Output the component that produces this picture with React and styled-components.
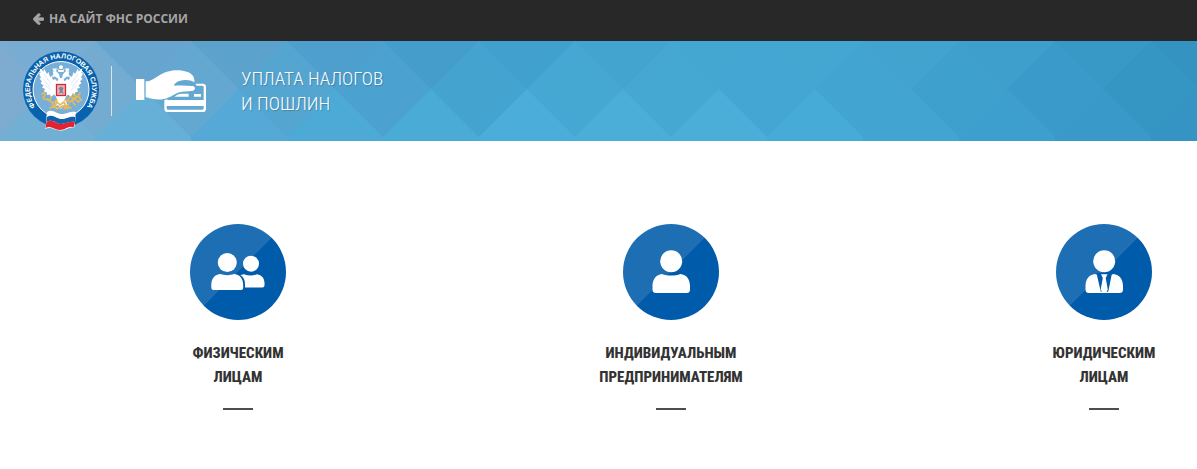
import styled, { createGlobalStyle } from "styled-components";

const topCells = [
  "#79acd2", "#67a5ce", "#5ba2cd", "#4f9fce", "#459dcc", "#42a0ce", "#43a4d0",
  "#44a7d2", "#44a7d1", "#42a3cf", "#3e9ecc", "#3899c7", "#3593c1",
];

const middleCells = [
  "#7eacd0", "#74abd1", "#64a7d1", "#55a5d1", "#4ba2d0", "#45a3d0", "#45a8d3",
  "#45a8d3", "#44a7d3", "#42a5d1", "#3da0cd", "#3a9aca", "#3595c3",
];

const bottomCells = [
  "#72afd5", "#66afd6", "#55a9d6", "#4daad7", "#4aabd6", "#4badd9", "#4baed9",
  "#4aaed9", "#46acd7", "#42a5d1", "#3c9fcd", "#3999c8", "#3594c3",
];

function Pattern() {
  return (
    <PatternSvg viewBox="0 0 1197 100" preserveAspectRatio="xMidYMid slice" aria-hidden="true">
      {topCells.map((color, i) => (
        <rect key={i} x={i * 96 - 1} y="0" width="96" height="48" fill={color} />
      ))}
      {bottomCells.map((color, i) => (
        <rect key={i} x={i * 96 - 1} y="48" width="96" height="52" fill={color} />
      ))}
      {middleCells.map((color, i) => (
        <path key={i} d={`M${i * 96 - 1} 0l48 48l-48 48l-48 -48z`} fill={color} />
      ))}
    </PatternSvg>
  );
}

function ArrowLeft() {
  return (
    <svg width="11" height="12" viewBox="180 130 1500 1636" fill="currentColor" aria-hidden="true">
      <path
        stroke="currentColor"
        strokeWidth="90"
        d="M1664 896v128q0 53-32.5 90.5t-84.5 37.5h-704l293 294q38 36 38 90t-38 90l-75 76q-37 37-90 37-52 0-91-37l-651-652q-37-37-37-90 0-52 37-91l651-650q38-38 91-38 52 0 90 38l75 74q38 38 38 91t-38 91l-293 293h704q52 0 84.5 37.5t32.5 90.5z"
      />
    </svg>
  );
}

function Emblem() {
  return (
    <svg width="76" height="80" viewBox="0 0 76 80" aria-hidden="true">
      <defs>
        <path id="ring" d="M15.700 60A31 31 0 1 1 60.300 60" />
      </defs>
      <circle cx="38" cy="38.500" r="38" fill="#0862ae" />
      <circle cx="38" cy="38.500" r="28" fill="#78afd8" stroke="#fff" strokeWidth="1" />
      <RingText>
        <textPath href="#ring" startOffset="50%">ФЕДЕРАЛЬНАЯ НАЛОГОВАЯ СЛУЖБА</textPath>
      </RingText>

      {/* wings */}
      <g fill="#fff">
        <path id="wing" d="M35 31L32 28L30 29L28.500 25L27 26L25.500 21L24 23L21 17.500L20.500 20.500L16.500 17L17.500 22L16 22.500L18 26.500L16.500 27.500L19 30.500L17.500 32L20.500 34.500L19 36.500L22 38L21 40.500L24 41.500L24 44L27 43.500L28 46L31 43.500L35 48Z" />
        <use href="#wing" transform="matrix(-1 0 0 1 76 0)" />
        <path d="M35.500 28L32 25.500L28.500 26L30.500 23L29.500 20.500L33 20L36 23L37 27H39L40 23L43 20L46.500 20.500L45.500 23L47.500 26L44 25.500L40.500 28L43 33V46L38 53L33 46V33Z" />
        <path d="M34.500 17.500L36 19H40L41.500 17.500L40.500 21H35.500ZM37.300 14H38.700V15H40L39.500 18H36.500L36 15H37.300Z" />
        <path d="M29.500 17.500H34L33 20H30.500ZM42 17.500H46.500L45.500 20H43Z" />
        <path d="M34 47L31 56L35 54L38 58L41 54L45 56L42 47Z" />
      </g>
      <g fill="none" stroke="#a9c8de" strokeWidth="0.400">
        <path d="M21 23L28 33M20 28L27 36M22 34L28 39M55 23L48 33M56 28L49 36M54 34L48 39" />
      </g>

      {/* sceptre, orb and laurel */}
      <g fill="none" stroke="#e5b95c" strokeWidth="1.700" strokeLinecap="round">
        <path d="M19 43C20 41 23 42 22 44S19 47 21 48L27 49L28 46M24 48L30 52L34 49M27 57L32 55L34 51L37 54L41 51L43 55L48 57M29 53L34 58M46 53L41 58M42 49L47 51L51 47L55 51L58 49L55 45L57 42M50 43L54 46L49 50L52 54M30 56L36 57L40 55L45 58M52 47L47 46L44 50" />
      </g>

      <rect x="33.500" y="33.500" width="9" height="11" fill="#d8b9bd" stroke="#d9262e" strokeWidth="1.300" />
      <path d="M35.500 43L37 40L35.500 37L38 35.500L40.500 37L39.500 40L41 43L38 41.500Z" fill="#8d7e94" />

      {/* flag */}
      <path d="M24 61C30 57 34 64 40 63S48 60 53 61C52 66 53 70 51 77C46 75 43 80 37 79.500S28 75 22 78C24 71 23 67 24 61Z" fill="#fff" />
      <path d="M24 66C30 62 34 69 40 68S47 65 52 66L52 71C47 70 43 73 38 73S30 67 23.500 71Z" fill="#1560aa" />
      <path d="M23.500 71C30 67 34 74 39 73S47 70 52 71L50.500 76.500C46 74 43 79 37 79S28 74 22.500 77Z" fill="#e2222e" />
    </svg>
  );
}

function HandWithCard() {
  return (
    <svg width="70" height="42" viewBox="48 60 210 126" fill="#fff" aria-hidden="true">
      <rect x="48" y="87" width="25" height="63" rx="1" />
      <path d="M77 94C93 94 102 85 116 77C132 68 148 61 170 61C190 61 208 66 216 74C222 80 224 88 223 97C213 90 194 88 178 93C169 96 163 101 162 107C178 106 198 106 218 108C227 110 227 119 219 122C202 125 190 123 178 127C162 133 148 145 128 148C108 150 92 146 77 141Z" />
      <path
        fillRule="evenodd"
        d="M226 101H248Q258 101 258 111V176Q258 186 248 186H143Q133 186 133 176V151L142 147V151H251V111Q251 107 247 107H230ZM140 168V175Q140 179 144 179H247Q251 179 251 175V168Z"
      />
      <path d="M222 132H243V140H222ZM172 134L182 131H206V140H163ZM136 151H255V168H136Z" />
    </svg>
  );
}

function PeopleIcon() {
  return (
    <svg width="96" height="96" viewBox="0 0 96 96" fill="#fff" aria-hidden="true">
      <circle cx="37.300" cy="38.500" r="9.500" />
      <path d="M30 50C34.500 51.500 40 51.500 44.500 50C50.500 51 53.200 55 53.200 61V64Q53.200 66 51 66H23.500Q21.300 66 21.300 64V61C21.300 55 24 51 30 50Z" />
      <circle cx="61" cy="39.700" r="8" />
      <path d="M54 50.200C58.500 52 63 52 67 50.200C72 51 74.500 54.500 74.500 59V61.500Q74.500 63.500 72.300 63.500H55V60C55 56 53.500 53 50.500 51Z" />
    </svg>
  );
}

function PersonIcon({ suit }) {
  return (
    <svg width="96" height="96" viewBox="0 0 96 96" aria-hidden="true">
      <circle cx="48.200" cy="37.200" r="11" fill="#fff" />
      <path
        fill="#fff"
        d="M39 50C44.500 52 52 52 57.500 50C63.500 50.500 67 55.500 67 62V65.500Q67 69 63.500 69H33Q29.500 69 29.500 65.500V62C29.500 55.500 33 50.500 39 50Z"
      />
      {suit && (
        <>
          <path fill="#005bab" d="M40.500 49H56L52.300 67.500L48.300 69L44.700 67.500Z" />
          <path fill="#fff" d="M45 50.300H51.500L49.700 54L51.800 65.500L50.200 69H46.300L44.700 65.500L46.800 54Z" />
        </>
      )}
    </svg>
  );
}

const payers = [
  { lines: ["Физическим", "лицам"], icon: <PeopleIcon /> },
  { lines: ["Индивидуальным", "предпринимателям"], icon: <PersonIcon /> },
  { lines: ["Юридическим", "лицам"], icon: <PersonIcon suit /> },
];

export default function App() {
  return (
    <>
      <GlobalStyle />
      <TopBar>
        <BackLink href="#">
          <ArrowLeft />
          На сайт ФНС России
        </BackLink>
      </TopBar>

      <Header>
        <Pattern />
        <EmblemLink href="#" aria-label="ФНС России">
          <Emblem />
        </EmblemLink>
        <Divider />
        <HandWithCard />
        <Title>
          Уплата налогов
          <br />и пошлин
        </Title>
      </Header>

      <Payers>
        {payers.map(({ lines, icon }) => (
          <PayerLink href="#" key={lines[0]}>
            <Circle>{icon}</Circle>
            <PayerName>
              {lines[0]}
              <br />
              {lines[1]}
            </PayerName>
            <Dash />
          </PayerLink>
        ))}
      </Payers>
    </>
  );
}

const GlobalStyle = createGlobalStyle`
  * {
    box-sizing: border-box;
  }

  body {
    margin: 0;
    background: #fff;
    font-family: "Open Sans", sans-serif;
  }
`;

const TopBar = styled.nav`
  display: flex;
  align-items: center;
  padding: 10px 33px 14px;
  background: #282828;
`;

const BackLink = styled.a`
  display: flex;
  align-items: center;
  gap: 5px;
  color: #a6a6a6;
  font-size: 12px;
  font-weight: 700;
  line-height: 17px;
  text-decoration: none;
  text-transform: uppercase;
`;

const Header = styled.header`
  position: relative;
  display: flex;
  align-items: center;
  padding: 10px 23px;
  overflow: hidden;

  > * {
    position: relative;
    flex: none;
  }
`;

const PatternSvg = styled.svg`
  && {
    position: absolute;
    inset: 0;
    width: 100%;
    height: 100%;
  }
`;

const EmblemLink = styled.a`
  display: flex;
`;

const RingText = styled.text`
  fill: #fff;
  font-family: "Liberation Sans", sans-serif;
  font-size: 7px;
  font-weight: 700;
  text-anchor: middle;
`;

const Divider = styled.span`
  width: 1px;
  height: 50px;
  margin: 0 24px 0 12px;
  background: rgba(255, 255, 255, 0.7);
`;

const Title = styled.h1`
  margin: 0 0 0 35px;
  color: #fff;
  font-family: "Roboto Condensed", Roboto, sans-serif;
  font-size: 19px;
  font-weight: 300;
  line-height: 25px;
  text-transform: uppercase;
  text-shadow: 1px 1px 1px rgba(0, 0, 0, 0.2);
`;

const Payers = styled.main`
  display: grid;
  grid-template-columns: repeat(3, 144px);
  justify-content: space-between;
  padding: 83px 21px 59px 166px;
`;

const PayerLink = styled.a`
  display: flex;
  flex-direction: column;
  align-items: center;
  color: #333;
  text-decoration: none;
`;

const Circle = styled.span`
  display: flex;
  border-radius: 50%;
  background: linear-gradient(135deg, #1e6eb4 50%, #005bab 50%);
`;

const PayerName = styled.span`
  padding: 21px 0 19px;
  font-family: "Roboto Condensed", Roboto, sans-serif;
  font-size: 15px;
  font-weight: 800;
  line-height: 24px;
  text-align: center;
  text-transform: uppercase;
`;

const Dash = styled.span`
  width: 30px;
  height: 2px;
  background: #4d4d4d;
`;
